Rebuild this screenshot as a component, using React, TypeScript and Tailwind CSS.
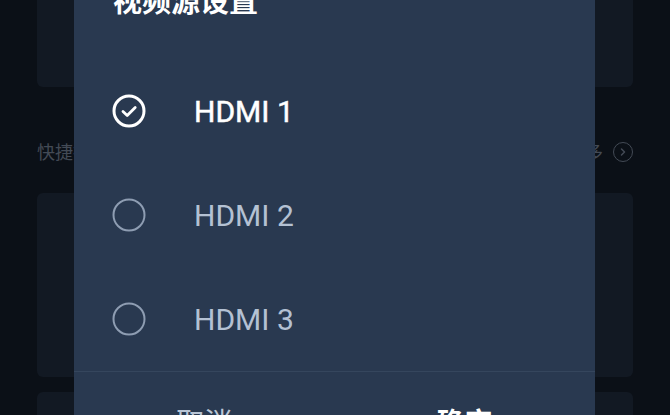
import { ChevronRight } from "lucide-react";

const options = ["HDMI 1", "HDMI 2", "HDMI 3"];

function CheckCircle() {
  return (
    <svg width="34" height="34" viewBox="0 0 34 34" fill="none">
      <circle cx="17" cy="17" r="15" stroke="#ffffff" strokeWidth="3" />
      <path
        d="M11 17.5l4.2 4 8-8"
        stroke="#ffffff"
        strokeWidth="2.8"
        strokeLinecap="round"
        strokeLinejoin="round"
      />
    </svg>
  );
}

function EmptyCircle() {
  return (
    <svg width="34" height="34" viewBox="0 0 34 34" fill="none">
      <circle cx="17" cy="17" r="15.5" stroke="#8e9db2" strokeWidth="2" />
    </svg>
  );
}

function Background() {
  return (
    <div className="flex flex-col px-[37px]">
      <div className="-mt-[40px] h-[127px] rounded-md bg-[#121923]" />
      <div className="flex h-[106px] items-start justify-between pt-[51px] text-[18px] leading-[27px] text-[#434a55]">
        <span>快捷操作</span>
        <div className="flex h-[27px] items-center gap-[10px]">
          <span>更多</span>
          <div className="flex h-[20px] w-[20px] items-center justify-center rounded-full border-[1.5px] border-[#434a55]">
            <ChevronRight size={12} strokeWidth={3} />
          </div>
        </div>
      </div>
      <div className="h-[184px] rounded-md bg-[#121923]" />
      <div className="mt-[15px] h-[120px] rounded-md bg-[#121923]" />
    </div>
  );
}

function SourceDialog() {
  return (
    <div className="absolute left-[74px] top-[-60px] flex w-[521px] flex-col rounded-xl bg-[#293950] font-['Roboto','Noto_Sans_CJK_SC',sans-serif]">
      <div className="flex h-[119px] items-center pl-[39px]">
        <h2 className="text-[29px] font-bold text-white font-['Noto_Sans_CJK_SC',sans-serif]">
          视频源设置
        </h2>
      </div>
      {options.map((name, i) => (
        <div key={name} className="flex h-[104px] items-center gap-[48px] pl-[38px]">
          {i === 0 ? <CheckCircle /> : <EmptyCircle />}
          <span
            className={
              i === 0
                ? "text-[30px] font-normal text-white [-webkit-text-stroke:0.5px_white]"
                : "text-[30px] font-normal text-[#b4c1d3]"
            }
          >
            {name}
          </span>
        </div>
      ))}
      <div className="h-px bg-[#35465d]" />
      <div className="grid h-[98px] grid-cols-2 font-['Noto_Sans_CJK_SC',sans-serif] text-[28px]">
        <button className="flex items-center justify-center text-[#b9c5d5]">取消</button>
        <button className="flex items-center justify-center font-bold text-white">确定</button>
      </div>
    </div>
  );
}

export default function App() {
  return (
    <div className="relative h-[415px] w-[670px] overflow-hidden bg-[#0b1017] font-['Noto_Sans_CJK_SC',sans-serif]">
      <Background />
      <SourceDialog />
    </div>
  );
}
